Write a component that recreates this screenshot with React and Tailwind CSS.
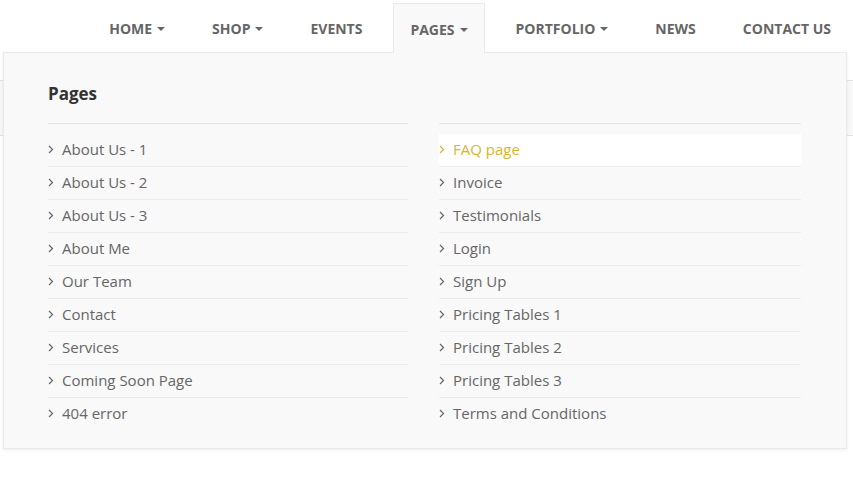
import React from "react";

const navItems = [
  { label: "HOME", caret: true },
  { label: "SHOP", caret: true },
  { label: "EVENTS" },
  { label: "PAGES", caret: true, active: true },
  { label: "PORTFOLIO", caret: true },
  { label: "NEWS" },
  { label: "CONTACT US" },
];

const leftLinks = [
  "About Us - 1",
  "About Us - 2",
  "About Us - 3",
  "About Me",
  "Our Team",
  "Contact",
  "Services",
  "Coming Soon Page",
  "404 error",
];

const rightLinks = [
  "FAQ page",
  "Invoice",
  "Testimonials",
  "Login",
  "Sign Up",
  "Pricing Tables 1",
  "Pricing Tables 2",
  "Pricing Tables 3",
  "Terms and Conditions",
];

const Chevron = ({ color }) => (
  <svg width="6" height="9" viewBox="0 0 6 9" className="shrink-0">
    <polyline
      points="1,1 4.5,4.5 1,8"
      fill="none"
      stroke={color}
      strokeWidth="1.2"
    />
  </svg>
);

const LinkList = ({ title, links, activeIndex }) => (
  <div>
    <h3 className="h-[71px] pt-[29px] border-b border-[#e5e5e5] text-[17px] font-bold text-[#333] leading-[24px]">
      {title}
    </h3>

    <ul className="mt-[10px]">
      {links.map((link, i) => {
        const active = i === activeIndex;
        const last = i === links.length - 1;

        return (
          <li
            key={link}
            className={`flex items-center gap-[8px] h-[33px] pb-[2px] ${
              last ? "" : "border-b border-[#ececec]"
            } ${active ? "bg-white text-[#d8b52e]" : "text-[#666]"}`}
          >
            <Chevron color={active ? "#d8b52e" : "#666"} />
            <span className="text-[15px] leading-none">{link}</span>
          </li>
        );
      })}
    </ul>
  </div>
);

export default function App() {
  return (
    <div
      className="relative w-[853px] h-[484px] bg-white overflow-hidden"
      style={{ fontFamily: '"Open Sans", "Liberation Sans", sans-serif' }}
    >
      {/* Header */}
      <header className="relative h-[52px]">
        <ul className="flex justify-end pr-[6px] pt-[3px]">
          {navItems.map((item) => (
            <li
              key={item.label}
              className={`relative flex items-center gap-[5px] px-[16px] pt-[2px] ml-[15px] text-[14px] font-bold text-[#666] ${
                item.active
                  ? "z-20 h-[50px] bg-[#f9f9f9] border border-b-0 border-[#eaeaea]"
                  : "h-[49px]"
              }`}
            >
              <span className="leading-none">{item.label}</span>
              {item.caret && (
                <span className="w-0 h-0 border-x-[4px] border-x-transparent border-t-[4px] border-t-[#666]"></span>
              )}
            </li>
          ))}
        </ul>
      </header>

      {/* Page title strip behind menu */}
      <div className="mt-[28px] h-[56px] bg-[#f8f8f8] border-y border-[#e3e3e3]"></div>

      {/* Dropdown */}
      <div className="absolute z-10 top-[52px] left-[3px] w-[844px] h-[397px] bg-[#f9f9f9] border border-[#eaeaea] shadow-[0_1px_3px_rgba(0,0,0,0.08)]">
        <div className="grid grid-cols-[360px_1fr] gap-[31px] pl-[44px] pr-[45px]">
          <LinkList title="Pages" links={leftLinks} />
          <LinkList title="" links={rightLinks} activeIndex={0} />
        </div>
      </div>
    </div>
  );
}
